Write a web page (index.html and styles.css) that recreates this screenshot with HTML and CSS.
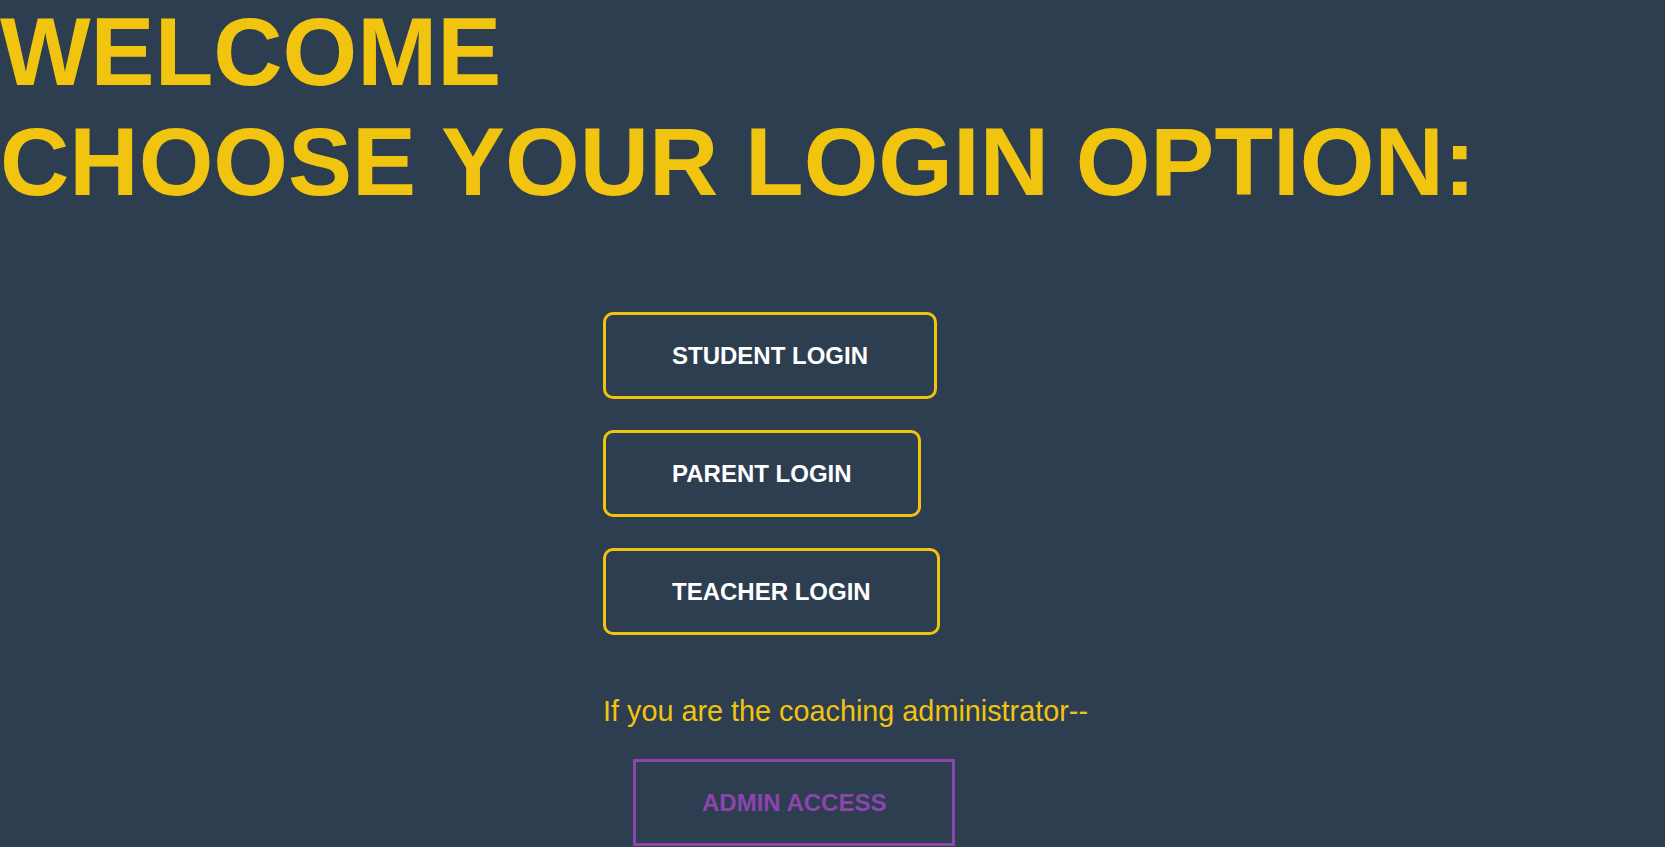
FILE: index.html
```html
<!DOCTYPE html>
<html lang="en">
<head>
<meta charset="utf-8">
<title>Welcome</title>
<link rel="stylesheet" href="styles.css">
</head>
<body>
<h1 class="title">WELCOME<br>CHOOSE YOUR LOGIN OPTION:</h1>
<main class="options">
  <button class="btn btn-login" type="button">STUDENT LOGIN</button>
  <button class="btn btn-login" type="button">PARENT LOGIN</button>
  <button class="btn btn-login" type="button">TEACHER LOGIN</button>
  <p class="admin-note">If you are the coaching administrator--</p>
  <button class="btn btn-admin" type="button">ADMIN ACCESS</button>
</main>
</body>
</html>
```

FILE: styles.css
```css
html, body {
  margin: 0;
  padding: 0;
}

body {
  background: #2c3e50;
  font-family: "Liberation Sans", Arial, sans-serif;
  min-height: 100vh;
}

.title {
  margin: -3px 0 0;
  font-size: 96px;
  font-weight: 700;
  color: #f1c40f;
  line-height: normal;
}

.options {
  display: flex;
  flex-direction: column;
  align-items: flex-start;
  padding-left: 603px;
  padding-top: 95px;
}

.btn {
  font-family: "Liberation Sans", Arial, sans-serif;
  font-size: 24px;
  font-weight: 700;
  line-height: normal;
  background: transparent;
  padding: 26.5px 66px;
  margin: 0;
  cursor: pointer;
}

.btn-login {
  color: #ffffff;
  border: 3px solid #f1c40f;
  border-radius: 10px;
  margin-bottom: 31px;
}

.admin-note {
  margin: 29px 0 31px;
  font-size: 28.8px;
  color: #f1c40f;
  line-height: normal;
}

.btn-admin {
  color: #8e44ad;
  border: 3px solid #8e44ad;
  border-radius: 0;
  margin-left: 30px;
}
```
